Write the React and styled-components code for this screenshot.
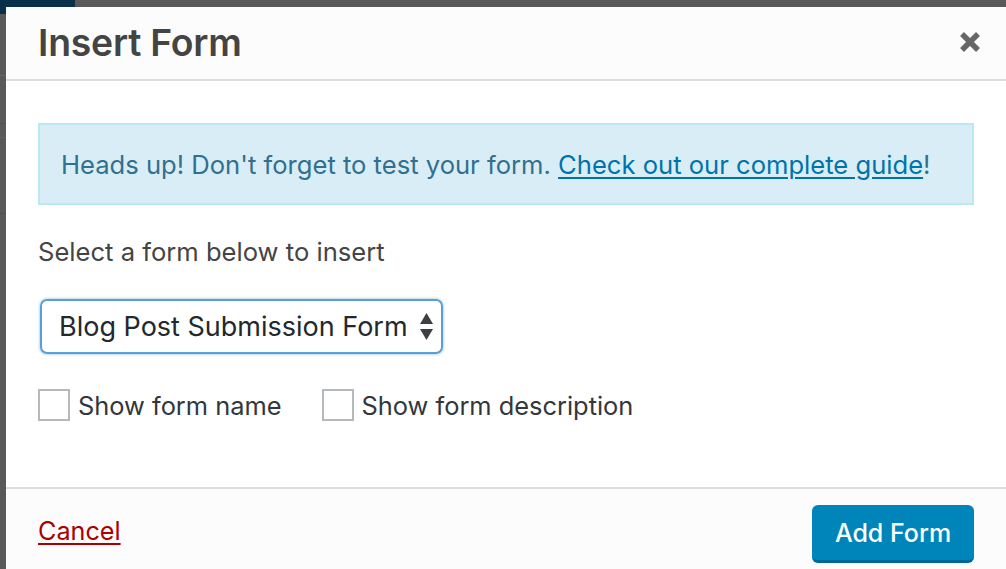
import React from 'react';
import styled, { createGlobalStyle } from 'styled-components';

const GlobalStyle = createGlobalStyle`
  html, body {
    margin: 0;
    padding: 0;
    background: #585858;
    font-family: Inter, "Open Sans", sans-serif;
  }
  * {
    box-sizing: border-box;
  }
`;

const Backdrop = styled.div`
  width: 1006px;
  height: 569px;
  overflow: hidden;
  padding: 7px 0 0 6px;
  background-color: #595959;
  background-image:
    linear-gradient(#093049, #093049),
    linear-gradient(#676767, #676767),
    linear-gradient(#525252, #525252),
    linear-gradient(#626262, #626262),
    linear-gradient(#4f4f4f, #4f4f4f);
  background-repeat: no-repeat;
  background-size: 75px 14px, 6px 1px, 6px 1px, 6px 1px, 6px 1px;
  background-position: 0 0, 0 75px, 0 123px, 0 137px, 0 213px;
`;

const Modal = styled.div`
  width: 1000px;
  height: 562px;
  background: #fff;
  display: flex;
  flex-direction: column;
`;

const Header = styled.div`
  height: 74px;
  flex: none;
  display: flex;
  align-items: center;
  justify-content: space-between;
  padding: 0 25px 2px 32px;
  background: #fcfcfc;
  border-bottom: 2px solid #dddddd;
`;

const Title = styled.h1`
  margin: 0;
  font-size: 37.3px;
  font-weight: 600;
  color: #444;
  letter-spacing: -0.2px;
`;

const CloseButton = styled.button`
  border: 0;
  background: none;
  padding: 0;
  width: 22px;
  height: 22px;
  display: flex;
  cursor: pointer;
`;

const Body = styled.div`
  height: 406px;
  flex: none;
  padding: 42px 32px 0;
  display: flex;
  flex-direction: column;
`;

const Notice = styled.div`
  height: 82px;
  display: flex;
  align-items: center;
  padding: 0 21px;
  background: #d9edf7;
  border: 2px solid #bce8f1;
  color: #31708f;
  font-size: 25.6px;
`;

const GuideLink = styled.a`
  color: #0073aa;
  text-decoration: underline;
  text-underline-offset: 3px;
`;

const Label = styled.p`
  margin: 29px 0 0;
  line-height: 36px;
  font-size: 25.6px;
  color: #444;
`;

const SelectBox = styled.div`
  margin: 29px 0 0 2px;
  width: 403px;
  height: 55px;
  display: flex;
  align-items: center;
  justify-content: space-between;
  padding: 0 8px 0 17px;
  border: 2px solid #5b9dd9;
  border-radius: 7px;
  box-shadow: 0 0 3px rgba(30, 140, 190, 0.6);
  font-size: 27px;
  color: #23282d;
`;

const CheckRow = styled.div`
  margin-top: 35px;
  display: flex;
  gap: 40px;
`;

const CheckLabel = styled.label`
  display: flex;
  align-items: center;
  gap: 8px;
  font-size: 25.4px;
  color: #32373c;
`;

const Box = styled.span`
  width: 32px;
  height: 32px;
  border: 2px solid #b4b9be;
  background: #fff;
`;

const Footer = styled.div`
  flex: 1;
  display: flex;
  align-items: flex-start;
  justify-content: space-between;
  padding: 16px 32px 0;
  background: #fcfcfc;
  border-top: 2px solid #dddddd;
`;

const Cancel = styled.a`
  margin-top: 11px;
  font-size: 25.2px;
  color: #a00;
  text-decoration: underline;
  text-underline-offset: 3px;
`;

const AddButton = styled.button`
  width: 162px;
  height: 58px;
  border: 0;
  border-bottom: 3px solid #006799;
  border-radius: 6px;
  background: #0085ba;
  color: #fff;
  font-family: inherit;
  font-size: 25px;
  font-weight: 500;
  cursor: pointer;
`;

function Arrows() {
  return (
    <svg width="13" height="27" viewBox="0 0 13 27">
      <path d="M6.5 0 L13 11 H0 Z" fill="#3c4043" />
      <path d="M0 16 H13 L6.5 27 Z" fill="#3c4043" />
    </svg>
  );
}

function CloseIcon() {
  return (
    <svg width="22" height="22" viewBox="0 0 22 22">
      <path d="M3 3 L19 19 M19 3 L3 19" stroke="#666" strokeWidth="5.5" />
    </svg>
  );
}

export default function App() {
  return (
    <>
      <GlobalStyle />
      <Backdrop>
        <Modal>
          <Header>
            <Title>Insert Form</Title>
            <CloseButton aria-label="Close">
              <CloseIcon />
            </CloseButton>
          </Header>
          <Body>
            <Notice>
              <span>
                Heads up! Don't forget to test your form.{' '}
                <GuideLink href="#">Check out our complete guide</GuideLink>!
              </span>
            </Notice>
            <Label>Select a form below to insert</Label>
            <SelectBox>
              <span>Blog Post Submission Form</span>
              <Arrows />
            </SelectBox>
            <CheckRow>
              <CheckLabel>
                <Box />
                Show form name
              </CheckLabel>
              <CheckLabel>
                <Box />
                Show form description
              </CheckLabel>
            </CheckRow>
          </Body>
          <Footer>
            <Cancel href="#">Cancel</Cancel>
            <AddButton>Add Form</AddButton>
          </Footer>
        </Modal>
      </Backdrop>
    </>
  );
}
